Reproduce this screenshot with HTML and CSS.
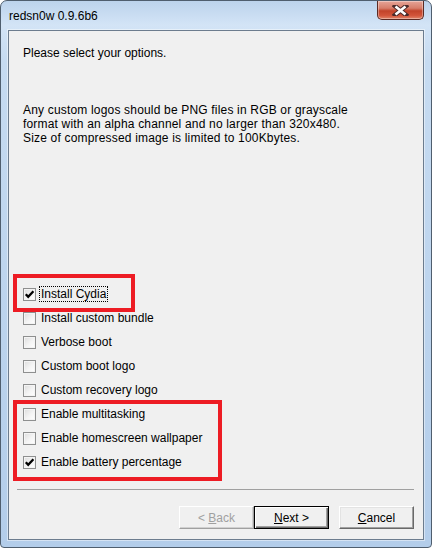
FILE: index.html
```html
<!DOCTYPE html>
<html lang="en">
<head>
  <meta charset="UTF-8" />
  <title>redsn0w 0.9.6b6</title>
  <link rel="stylesheet" href="styles.css">
</head>
<body>
  <div class="window">
    <div class="titlebar">
      <span class="title">redsn0w 0.9.6b6</span>
      <div class="close">
        <svg width="17" height="11" viewBox="0 0 17 11">
          <path d="M3 1 L14 10 M14 1 L3 10" stroke="#4a2a2a" stroke-width="4.5" stroke-linecap="square" />
          <path d="M3.5 1.5 L13.5 9.5 M13.5 1.5 L3.5 9.5" stroke="#fff" stroke-width="2.6" />
        </svg>
      </div>
    </div>

    <div class="client">
      <p class="heading">Please select your options.</p>
      <p class="desc">Any custom logos should be PNG files in RGB or grayscale<br>format with an alpha channel and no larger than 320x480.<br>Size of compressed image is limited to 100Kbytes.</p>

      <div class="options">
        <label class="opt"><span class="box checked"></span><span class="focus">Install Cydia</span></label>
        <label class="opt"><span class="box"></span>Install custom bundle</label>
        <label class="opt"><span class="box"></span>Verbose boot</label>
        <label class="opt"><span class="box"></span>Custom boot logo</label>
        <label class="opt"><span class="box"></span>Custom recovery logo</label>
        <label class="opt"><span class="box"></span>Enable multitasking</label>
        <label class="opt"><span class="box"></span>Enable homescreen wallpaper</label>
        <label class="opt"><span class="box checked"></span>Enable battery percentage</label>
      </div>

      <div class="sep"></div>

      <div class="buttons">
        <button class="btn disabled">&lt; <u>B</u>ack</button>
        <button class="btn default"><u>N</u>ext &gt;</button>
        <button class="btn cancel"><u>C</u>ancel</button>
      </div>

      <!-- red marks drawn over the dialog -->
      <div class="mark mark-cydia"></div>
      <div class="mark mark-enable"></div>
    </div>
  </div>
</body>
</html>
```

FILE: styles.css
```css
html, body { margin: 0; padding: 0; background: #fff; }
body { font-family: "Liberation Sans", Arial, sans-serif; font-size: 12px; color: #000; }

.window {
  width: 432px; height: 548px; box-sizing: border-box;
  border: 1px solid #4f5e6e; border-radius: 7px 7px 4px 4px;
  padding: 0 7px 7px 7px;
  display: flex; flex-direction: column;
  background: linear-gradient(to bottom, #bcd3ec 0, #d3e4f6 24px, #c6dbf1 60px, #b3cdea 100%);
}

.titlebar {
  height: 29px; display: flex; align-items: flex-start; justify-content: space-between;
}
.title { margin-top: 8px; padding-left: 1px; font-size: 12px; color: #000; }
.close {
  width: 47px; height: 19px; box-sizing: border-box;
  border: 1px solid #5b2a23; border-top: none; border-radius: 0 0 5px 5px;
  background: linear-gradient(to bottom, #e6a598 0, #d77d6a 40%, #c2432a 55%, #d2543a 80%, #e0856a 100%);
  box-shadow: inset 0 0 0 1px rgba(255,255,255,0.35);
  display: flex; align-items: center; justify-content: center;
}

.client {
  position: relative;
  flex: 1; display: flex; flex-direction: column;
  background: #f0f0f0; border: 1px solid #6c7c8e;
  box-shadow: 0 0 0 1px rgba(255,255,255,0.45);
  padding: 0 0 10px 0;
}

.heading { margin: 15px 0 0 14px; line-height: 14px; }
.desc { margin: 43px 0 0 14px; line-height: 14px; letter-spacing: 0.18px; }

.options { margin-top: 137px; padding-left: 14px; }
.opt { display: flex; align-items: center; height: 24px; }
.box {
  width: 13px; height: 13px; box-sizing: border-box; margin-right: 5px;
  border: 1px solid #8e8f8f;
  background: linear-gradient(135deg, #dcdcdc 0, #f4f4f4 55%, #fff 100%);
  box-shadow: inset 0 0 0 1px #f4f4f4;
}
.box.checked {
  background-image: url("data:image/svg+xml,%3Csvg xmlns='http://www.w3.org/2000/svg' width='11' height='11'%3E%3Cpath d='M1.8 5.2 L4.2 7.8 L9.4 2.2' fill='none' stroke='%23000' stroke-width='2.3'/%3E%3C/svg%3E"), linear-gradient(135deg, #dcdcdc 0, #f4f4f4 55%, #fff 100%);
  background-repeat: no-repeat;
}
.focus { outline: 1px dotted #000; outline-offset: 0; padding: 0 1px; margin-left: -1px; line-height: 14px; }

.sep { margin: 15px 9px 0 8px; height: 1px; background: #a0a0a0; }

.buttons { display: flex; justify-content: flex-end; margin-top: 16px; padding-right: 9px; }
.btn {
  width: 75px; height: 23px; box-sizing: border-box;
  font-family: inherit; font-size: 12px; color: #000;
  background: #f0f0f0; border: 1px solid; border-color: #fff #696969 #696969 #fff;
  box-shadow: inset -1px -1px 0 #a0a0a0, inset 1px 1px 0 #e3e3e3;
  padding: 0;
}
.btn u { text-underline-offset: 1px; }
.btn.disabled { color: #a0a0a0; border-color: #fff #a0a0a0 #a0a0a0 #fff; box-shadow: inset -1px -1px 0 #d0d0d0; }
.btn.default { border: 1px solid #000; box-shadow: inset 1px 1px 0 #fff, inset -1px -1px 0 #696969, inset -2px -2px 0 #a0a0a0; }
.btn.cancel { margin-left: 10px; }

.mark { position: absolute; border: 4px solid #ed1c24; box-sizing: border-box; }
.mark-cydia { left: 4px; top: 243px; width: 122px; height: 38px; }
.mark-enable { left: 4px; top: 369px; width: 209px; height: 81px; }
```
